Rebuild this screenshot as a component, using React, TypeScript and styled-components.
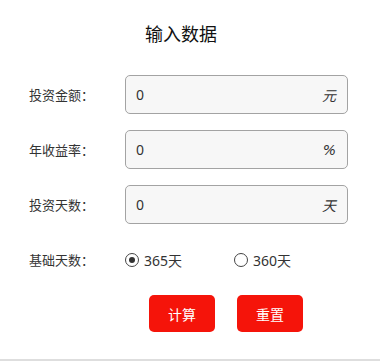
import { useState } from "react";
import styled, { createGlobalStyle } from "styled-components";

const GlobalStyle = createGlobalStyle`
    html, body {
        margin: 0;
        padding: 0;
        background: #fff;
    }
    body {
        font-family: "Noto Sans", "Noto Sans CJK SC", sans-serif;
        color: #333;
    }
`

const Page = styled.div`
    width: 380px;
    height: 359px;
    border-bottom: 2px solid #dedede;
    box-sizing: content-box;
`

const Title = styled.h2`
    margin: 0;
    padding: 21px 18px 0 0;
    height: 54px;
    box-sizing: border-box;
    text-align: center;
    font-family: "Noto Sans CJK SC", sans-serif;
    font-size: 18px;
    line-height: 24px;
    font-weight: 400;
    color: #111;
`

const Form = styled.div`
    display: flex;
    flex-direction: column;
    gap: 16px;
    padding: 21px 0 0 29px;
`

const Row = styled.div`
    display: flex;
    align-items: center;
    height: 39px;
`

const Label = styled.label`
    width: 96px;
    font-family: "Noto Sans CJK SC", sans-serif;
    font-size: 13px;
    color: #333;
`

const Field = styled.div`
    display: flex;
    align-items: center;
    justify-content: space-between;
    width: 223px;
    height: 39px;
    padding: 0 11px 0 10px;
    box-sizing: border-box;
    border: 1px solid #a3a3a3;
    border-radius: 5px;
    background-color: #f7f7f7;

    input {
        flex: 1;
        min-width: 0;
        border: none;
        outline: none;
        background: transparent;
        font-family: "Noto Sans", sans-serif;
        font-size: 14px;
        color: #333;
        padding: 0;
    }

    i {
        font-family: "DejaVu Sans", "Noto Sans CJK SC", sans-serif;
        font-style: oblique;
        font-size: 14px;
        color: #333;
    }
`

const RadioGroup = styled.div`
    display: flex;
    align-items: center;
`

const RadioOption = styled.span`
    display: flex;
    align-items: center;
    gap: 5px;
    width: 109px;
    font-size: 14px;
    color: #333;
    cursor: pointer;
`

const Dot = styled.span<{ $checked: boolean }>`
    display: flex;
    justify-content: center;
    align-items: center;
    width: 12px;
    height: 12px;
    border: 1px solid #444;
    border-radius: 50%;
    background: #fff;

    &::after {
        content: "";
        display: ${(p) => (p.$checked ? "block" : "none")};
        width: 6px;
        height: 6px;
        border-radius: 50%;
        background: #333;
    }
`

const Actions = styled.div`
    display: flex;
    gap: 22px;
    padding-left: 120px;
`

const Button = styled.button`
    width: 66px;
    height: 37px;
    border: none;
    border-radius: 5px;
    background-color: #f5140a;
    color: #fff;
    font-family: "Noto Sans CJK SC", sans-serif;
    font-size: 14px;
    cursor: pointer;
`

const fields = [
    { key: "amount", label: "投资金额：", unit: "元" },
    { key: "rate", label: "年收益率：", unit: "%" },
    { key: "days", label: "投资天数：", unit: "天" },
];

export default function App() {
    let [values, setValues] = useState<Record<string, string>>({ amount: "0", rate: "0", days: "0" });
    let [base, setBase] = useState(365);

    const reset = () => {
        setValues({ amount: "0", rate: "0", days: "0" });
        setBase(365);
    }

    return (
        <Page>
            <GlobalStyle />
            <Title>输入数据</Title>
            <Form>
                {fields.map((f) => (
                    <Row key={f.key}>
                        <Label>{f.label}</Label>
                        <Field>
                            <input
                                value={values[f.key]}
                                onChange={(e) => setValues({ ...values, [f.key]: e.target.value })}
                            />
                            <i>{f.unit}</i>
                        </Field>
                    </Row>
                ))}
                <Row>
                    <Label>基础天数：</Label>
                    <RadioGroup>
                        {[365, 360].map((d) => (
                            <RadioOption key={d} onClick={() => setBase(d)}>
                                <Dot $checked={base == d} />
                                {d}天
                            </RadioOption>
                        ))}
                    </RadioGroup>
                </Row>
                <Actions>
                    <Button>计算</Button>
                    <Button onClick={reset}>重置</Button>
                </Actions>
            </Form>
        </Page>
    );
}
